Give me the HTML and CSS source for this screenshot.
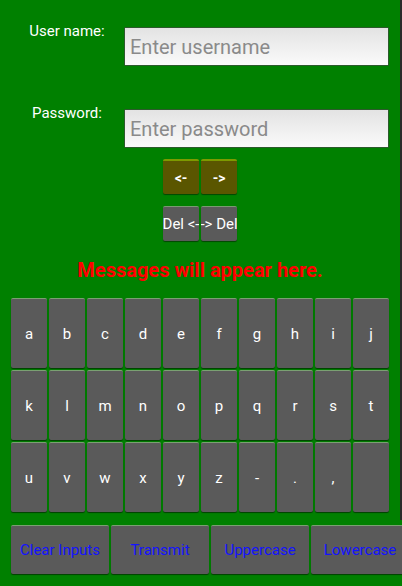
FILE: index.html
```html
<!DOCTYPE html>
<html>
<head>
<meta charset="utf-8">
<link rel="stylesheet" href="styles.css">
</head>
<body>
<div class="page">
  <div class="main">
    <div class="form-row first">
      <div class="label">User name:</div>
      <input class="field" type="text" placeholder="Enter username">
    </div>
    <div class="form-row">
      <div class="label">Password:</div>
      <input class="field" type="text" placeholder="Enter password">
    </div>
    <div class="pair arrows">
      <button class="small olive">&lt;-</button>
      <button class="small olive">-&gt;</button>
    </div>
    <div class="pair dels">
      <button class="small gray"><span>Del &lt;-</span></button>
      <button class="small gray"><span>-&gt; Del</span></button>
    </div>
    <div class="message">Messages will appear here.</div>
    <div class="keys">
      <button class="key">a</button><button class="key">b</button><button class="key">c</button><button class="key">d</button><button class="key">e</button><button class="key">f</button><button class="key">g</button><button class="key">h</button><button class="key">i</button><button class="key">j</button>
      <button class="key">k</button><button class="key">l</button><button class="key">m</button><button class="key">n</button><button class="key">o</button><button class="key">p</button><button class="key">q</button><button class="key">r</button><button class="key">s</button><button class="key">t</button>
      <button class="key">u</button><button class="key">v</button><button class="key">w</button><button class="key">x</button><button class="key">y</button><button class="key">z</button><button class="key">-</button><button class="key">.</button><button class="key">,</button><button class="key"></button>
    </div>
  </div>
  <div class="bottom">
    <button class="action">Clear Inputs</button>
    <button class="action">Transmit</button>
    <button class="action">Uppercase</button>
    <button class="action">Lowercase</button>
  </div>
</div>
</body>
</html>
```
FILE: styles.css
```css
html, body {
  margin: 0;
  padding: 0;
  overflow: hidden;
  background: #2a2a2a;
  font-family: Roboto, "Noto Sans", sans-serif;
}
.page {
  width: 402px;
  height: 586px;
  display: flex;
  flex-direction: column;
}
.main {
  width: 400px;
  height: 520px;
  background: #008000;
  display: flex;
  flex-direction: column;
  align-items: stretch;
}
.form-row {
  display: grid;
  grid-template-columns: 114px 265px;
  margin-left: 10px;
  margin-top: 38px;
  align-items: start;
}
.form-row.first {
  margin-top: 22px;
}
.label {
  color: #fff;
  font-size: 15px;
  line-height: 19px;
  text-align: center;
}
.field {
  box-sizing: border-box;
  margin: 5px 0 0 0;
  width: 265px;
  height: 39px;
  border: 1px solid #2d5a2d;
  border-radius: 1px;
  background: linear-gradient(#e3e3e3, #fafafa);
  padding: 0 0 0 5px;
  font-family: Roboto, sans-serif;
  font-size: 20px;
  color: #333;
  outline: none;
}
.field::placeholder {
  color: #8a8a8a;
}
.pair {
  display: flex;
  justify-content: center;
  gap: 2px;
}
.arrows { margin-top: 11px; }
.dels { margin-top: 12px; }
.small {
  box-sizing: border-box;
  width: 36px;
  height: 35px;
  padding: 0;
  border: none;
  border-radius: 2px;
  color: #fff;
  font-family: Roboto, sans-serif;
  display: flex;
  align-items: center;
  justify-content: center;
  overflow: hidden;
  white-space: nowrap;
  box-shadow: 0 1px 1px rgba(0,0,0,0.45);
}
.olive {
  background: #5a5600;
  border-top: 2px solid #7d9a00;
  font-weight: bold;
  font-size: 14px;
}
.gray {
  background: #5a5a5a;
  border-top: 1px solid #7a9a72;
  font-size: 15px;
}
.gray span { flex: none; }
.message {
  margin-top: 17px;
  text-align: center;
  color: #ff0000;
  font-weight: bold;
  font-size: 20px;
  line-height: 24px;
}
.keys {
  margin: 16px 0 0 11px;
  display: grid;
  grid-template-columns: repeat(10, 36px);
  grid-auto-rows: 70px;
  gap: 2px;
}
.key, .action {
  box-sizing: border-box;
  padding: 0;
  border: none;
  border-top: 1px solid #7aa072;
  border-radius: 2px;
  background: #5a5a5a;
  box-shadow: 0 1px 1px rgba(0,0,0,0.5);
  font-family: Roboto, sans-serif;
}
.key {
  color: #fff;
  font-size: 15px;
}
.bottom {
  width: 402px;
  flex: 1;
  background: #008000;
  display: grid;
  grid-template-columns: repeat(4, 98px);
  grid-template-rows: 49px;
  gap: 2px;
  padding: 5px 0 0 11px;
  box-sizing: border-box;
  overflow: hidden;
}
.action {
  color: #1414ff;
  font-size: 15px;
  white-space: nowrap;
}
```
